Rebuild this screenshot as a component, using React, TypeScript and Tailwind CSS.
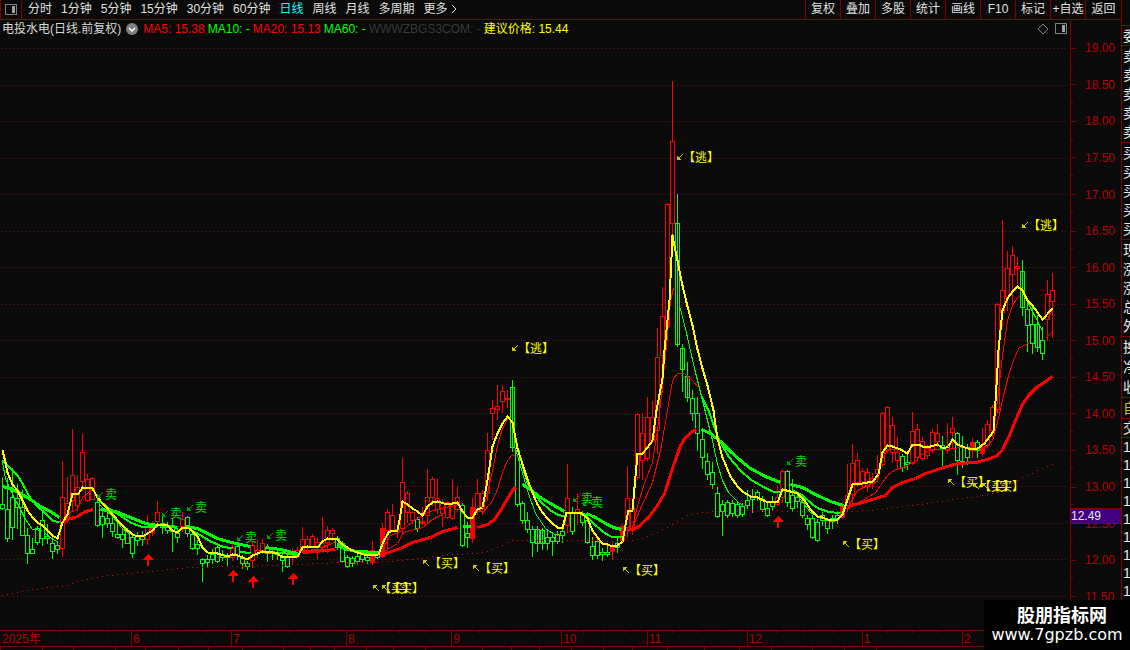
type Kind = "r" | "g" | "R" | "w";
type Candle = [number, number, number, number, Kind];
type Point = [number, number];

const RED = "#ff0000";
const GREEN = "#00ff00";
const YELLOW = "#ffff00";
const STEP = 5;

// high, body top, body bottom, low, kind (r/g hollow, R solid, w hollow with a visible wick)
const candles: Candle[] = [
  [478, 504, 508, 509, "g"], [478, 509, 538, 541, "g"], [468, 497, 527, 539, "g"], [484, 498, 507, 528, "g"],
  [490, 507, 535, 535, "g"], [528, 535, 553, 563, "g"], [538, 549, 553, 553, "g"], [526, 528, 542, 544, "g"],
  [512, 520, 538, 545, "g"], [524, 536, 538, 543, "g"], [534, 543, 551, 558, "g"], [541, 545, 549, 553, "g"],
  [461, 497, 548, 556, "r"], [477, 503, 516, 522, "r"], [429, 475, 500, 510, "r"], [475, 487, 505, 510, "r"],
  [434, 452, 481, 490, "r"], [474, 479, 500, 501, "r"], [477, 478, 499, 499, "r"], [500, 502, 525, 526, "g"],
  [510, 516, 524, 537, "g"], [510, 518, 523, 527, "g"], [514, 523, 531, 536, "g"], [523, 534, 537, 538, "g"],
  [529, 534, 539, 547, "g"], [528, 530, 543, 543, "g"], [535, 537, 553, 557, "g"], [532, 536, 540, 545, "g"],
  [531, 535, 539, 545, "g"], [515, 527, 539, 544, "r"], [521, 528, 532, 535, "r"], [501, 512, 521, 527, "r"],
  [517, 523, 527, 533, "g"], [522, 525, 530, 533, "g"], [518, 525, 531, 551, "g"], [528, 533, 537, 542, "g"],
  [512, 519, 526, 531, "r"], [516, 517, 533, 536, "g"], [530, 534, 548, 549, "g"], [540, 544, 548, 554, "g"],
  [558, 559, 563, 581, "g"], [555, 559, 562, 567, "g"], [549, 554, 559, 563, "g"], [545, 547, 561, 562, "g"],
  [550, 554, 557, 560, "g"], [553, 555, 557, 566, "g"], [541, 548, 557, 560, "r"], [545, 546, 555, 559, "g"],
  [555, 558, 563, 568, "g"], [561, 563, 566, 569, "g"], [542, 545, 560, 567, "r"], [540, 550, 553, 557, "r"],
  [539, 543, 550, 553, "r"], [544, 548, 553, 561, "g"], [549, 551, 553, 559, "g"], [550, 552, 554, 559, "g"],
  [553, 556, 560, 571, "g"], [555, 557, 566, 567, "g"], [548, 554, 557, 563, "r"], [547, 550, 556, 557, "r"],
  [527, 539, 551, 552, "r"], [536, 539, 546, 551, "r"], [534, 536, 546, 547, "r"], [538, 542, 547, 558, "r"],
  [517, 543, 547, 552, "r"], [526, 530, 542, 552, "r"], [528, 530, 533, 540, "r"], [536, 538, 547, 549, "g"],
  [541, 543, 561, 561, "g"], [555, 557, 566, 567, "g"], [556, 558, 563, 566, "g"], [552, 556, 561, 563, "g"],
  [552, 553, 559, 562, "g"], [552, 557, 560, 563, "g"], [541, 550, 562, 564, "R"], [552, 554, 557, 558, "g"],
  [523, 528, 556, 557, "R"], [509, 512, 530, 548, "r"], [504, 515, 530, 531, "r"], [526, 529, 531, 537, "r"],
  [458, 482, 528, 534, "r"], [491, 493, 512, 522, "r"], [511, 512, 520, 523, "r"], [517, 519, 528, 531, "g"],
  [507, 521, 523, 524, "R"], [469, 497, 515, 523, "r"], [477, 479, 497, 505, "r"], [479, 498, 509, 513, "r"],
  [499, 503, 513, 526, "r"], [501, 502, 517, 518, "r"], [479, 503, 518, 519, "r"], [486, 497, 509, 511, "r"],
  [503, 505, 545, 546, "g"], [522, 533, 537, 547, "g"], [498, 507, 538, 542, "R"], [479, 493, 511, 514, "r"],
  [490, 493, 511, 514, "r"], [433, 450, 493, 500, "r"], [400, 408, 413, 439, "r"], [385, 406, 409, 419, "r"],
  [385, 391, 401, 412, "r"], [390, 398, 399, 407, "r"], [380, 387, 447, 451, "w"], [448, 450, 504, 506, "g"],
  [501, 503, 520, 523, "g"], [512, 520, 529, 532, "g"], [526, 529, 542, 556, "g"], [526, 529, 543, 551, "w"],
  [528, 530, 543, 549, "w"], [530, 537, 543, 549, "g"], [532, 537, 541, 555, "g"], [531, 534, 541, 543, "g"],
  [527, 531, 535, 542, "g"], [464, 498, 525, 532, "r"], [507, 513, 531, 534, "g"], [494, 509, 513, 524, "r"],
  [511, 513, 522, 525, "g"], [515, 520, 542, 543, "g"], [537, 546, 555, 559, "g"], [536, 541, 555, 558, "g"],
  [548, 552, 554, 560, "g"], [546, 552, 554, 556, "g"], [543, 547, 551, 559, "R"], [538, 543, 547, 552, "g"],
  [524, 526, 540, 542, "R"], [466, 498, 527, 536, "r"], [498, 508, 530, 534, "r"], [413, 414, 477, 479, "r"],
  [413, 433, 460, 479, "r"], [397, 417, 458, 460, "r"], [401, 417, 440, 442, "r"], [328, 357, 430, 453, "r"],
  [287, 316, 355, 392, "r"], [203, 204, 326, 340, "r"], [81, 141, 223, 240, "r"], [194, 223, 344, 346, "w"],
  [344, 348, 369, 391, "w"], [362, 376, 397, 401, "w"], [390, 398, 413, 420, "g"], [397, 413, 433, 450, "g"],
  [432, 439, 457, 468, "g"], [453, 461, 474, 479, "g"], [462, 472, 484, 488, "g"], [487, 493, 516, 517, "g"],
  [500, 504, 511, 535, "g"], [500, 502, 515, 517, "g"], [500, 503, 513, 516, "g"], [501, 504, 515, 517, "g"],
  [503, 506, 514, 516, "g"], [490, 500, 505, 508, "g"], [489, 496, 499, 512, "g"], [490, 492, 497, 500, "g"],
  [496, 499, 509, 511, "g"], [503, 508, 515, 516, "g"], [496, 501, 506, 509, "g"], [485, 497, 504, 505, "r"],
  [469, 471, 497, 502, "r"], [470, 471, 502, 506, "g"], [479, 495, 508, 511, "g"], [494, 497, 501, 507, "g"],
  [499, 502, 515, 517, "g"], [515, 518, 524, 529, "g"], [515, 518, 537, 538, "g"], [519, 522, 540, 541, "g"],
  [511, 515, 520, 525, "g"], [518, 520, 528, 533, "g"], [515, 518, 521, 528, "g"], [512, 515, 518, 523, "g"],
  [502, 505, 517, 518, "R"], [464, 495, 508, 510, "r"], [444, 463, 494, 503, "r"], [453, 460, 482, 485, "r"],
  [468, 471, 483, 487, "r"], [468, 472, 486, 491, "r"], [473, 478, 483, 488, "r"], [455, 469, 473, 480, "r"],
  [412, 413, 464, 466, "r"], [406, 407, 450, 452, "r"], [417, 425, 452, 462, "r"], [437, 452, 460, 469, "r"],
  [454, 456, 467, 471, "g"], [453, 462, 464, 469, "g"], [412, 431, 463, 464, "r"], [424, 429, 457, 460, "r"],
  [437, 441, 458, 459, "r"], [445, 448, 455, 458, "r"], [429, 432, 450, 452, "r"], [424, 433, 441, 446, "r"],
  [436, 445, 448, 467, "g"], [423, 447, 450, 453, "r"], [417, 428, 432, 448, "r"], [432, 433, 460, 474, "g"],
  [436, 461, 463, 467, "g"], [444, 447, 457, 464, "g"], [438, 442, 450, 457, "R"], [440, 442, 450, 457, "g"],
  [428, 447, 453, 456, "R"], [420, 424, 445, 447, "r"], [405, 407, 430, 436, "r"], [303, 304, 409, 412, "r"],
  [220, 290, 312, 325, "r"], [251, 268, 296, 310, "r"], [246, 255, 274, 305, "r"], [257, 266, 268, 283, "r"],
  [260, 271, 307, 315, "w"], [300, 309, 325, 351, "g"], [307, 324, 343, 353, "g"], [315, 324, 347, 351, "w"],
  [327, 340, 353, 359, "g"], [280, 294, 319, 340, "r"], [273, 290, 301, 337, "r"],
];

const yellowLine =
  "2,450 5,462 7,472 12,484 17,490 22,500 27,510 32,517 37,522 42,525 47,530 52,535 57,538 62,522 67,514 72,493 78,493 82,487 92,488 97,497 105,506 112,514 120,523 127,530 134,535 142,536 147,533 152,530 157,524 167,525 172,530 177,532 182,527 187,527 190,529 197,536 202,547 207,552 217,553 227,556 232,554 237,555 242,557 247,559 252,555 262,551 272,552 277,553 282,557 297,556 302,547 307,546 317,547 322,541 327,538 337,539 342,544 350,549 357,552 367,555 378,554 383,541 388,532 392,530 397,530 399,520 402,501 407,504 412,508 417,511 422,515 427,506 432,502 437,501 447,504 457,502 462,511 467,517 472,517 477,509 482,507 487,480 492,446 497,433 502,423 507,416 512,422 517,448 522,464 527,479 532,492 537,504 542,512 547,518 552,523 557,527 562,528 566,512 580,512 587,518 592,530 597,537 602,543 607,544 612,546 617,545 622,541 625,525 628,510 632,510 637,453 642,453 647,447 652,440 656,410 662,378 664,350 667,320 669,300 672,235 677,260 682,285 687,306 692,325 697,349 702,368 707,385 713,410 717,438 722,457 730,476 737,486 742,491 750,496 757,497 765,501 777,502 782,489 790,491 797,493 804,500 810,509 817,516 822,517 827,519 837,519 842,514 847,499 852,484 862,483 872,481 878,474 882,452 887,445 892,446 900,449 907,453 912,444 918,444 924,447 930,446 937,444 943,448 948,446 952,439 957,444 967,448 977,448 984,443 993,431 996,385 998,350 1000,330 1002,310 1007,298 1012,291 1017,286 1022,290 1027,300 1032,305 1042,319 1052,308";

const thickRed = [
  "63,522 67,519 77,516 85,511 93,509",
  "302,552 315,551 335,549",
  "382,554 400,548 412,542 430,537 442,531 457,527",
  "477,527 487,524 494,519 500,510 507,498 512,490 515,487",
  "627,530 637,527 648,517 657,505 664,493 672,468 680,445 685,437 692,431 696,429",
  "847,506 862,502 875,498 885,495 892,487 902,482 915,478 925,473 940,468 957,463 975,462 990,458 997,455 1002,449 1008,437 1015,420 1022,404 1028,395 1036,387 1045,381 1052,376",
];

const thickGreen = [
  "2,486 10,488 20,493 30,499 40,506 50,511 59,517",
  "100,509 115,511 130,517 145,523 157,525",
  "162,525 177,527",
  "185,526 197,528 207,533 217,538 227,541 240,544 250,546",
  "265,547 280,549 297,553",
  "337,543 345,548 355,551 380,552",
  "462,526 470,526",
  "522,484 530,489 540,497 550,503 557,507 564,511",
  "586,513 595,517 605,523 613,527 621,529",
  "701,429 710,433 720,441 730,451 740,460 750,468 765,476 780,482",
  "790,484 802,487 815,494 830,501 843,505",
];

const mediumGreen = [
  "2,460 10,468 17,475 22,483 30,498 37,506 45,513 52,520 59,522",
  "97,498 107,507 115,512 130,522 140,526 157,527",
  "190,529 202,536 210,541 222,546 232,548",
  "240,551 250,553",
  "280,552 297,555",
  "337,545 345,549 370,553",
  "522,465 527,482 532,491 540,501 550,510 557,514 564,516",
  "584,514 592,522 602,531 610,536 621,537",
  "701,396 708,410 718,438 728,456 740,470 750,479 762,486 772,491 782,492",
  "792,490 802,495 812,504 818,508 827,511 840,513",
];

const thinGreen = [
  "2,462 5,478 10,490 17,503 25,519 32,529 42,530",
  "45,533 52,539 57,541",
  "100,505 112,516 122,528 130,534",
  "515,448 527,490 535,513 545,528 552,533 558,535",
  "587,520 594,534 602,543 612,546",
  "680,308 687,337 694,368 702,400 707,420 712,440 717,464 722,480 728,492 738,502 743,505",
  "797,495 810,512 822,518",
  "1027,301 1034,315 1042,330",
];

const thinRed = [
  "62,524 67,513 72,511 77,509 82,497 92,489",
  "302,550 320,549 335,541",
  "322,547 330,543",
  "382,548 390,535 400,531 412,521 427,512 440,508 460,504",
  "382,552 397,543 403,532 422,527 432,519 442,514",
  "482,510 487,493 492,470 497,445 502,428 508,417",
  "482,513 492,500 497,489 502,472 507,460 512,454 515,456",
  "632,527 637,505 645,480 652,462 657,430 662,385 666,345 670,300 673,288",
  "632,527 640,508 652,482 660,450 667,410 671,385 673,378 677,373 684,373 692,380 698,387",
  "847,508 857,490 867,485 877,481 882,458 887,449 900,449",
  "850,506 862,500 875,492 887,475 895,469 905,466 918,459",
  "918,456 930,449 945,449 960,447 975,449",
  "993,432 997,400 1002,355 1007,320 1012,305 1017,297 1020,296",
  "983,447 992,440 998,418 1003,395 1008,375 1013,360 1018,348 1023,345 1030,342",
  "1045,338 1052,331",
  "1047,318 1052,310",
];

const costLine: Point[] = [
  [2, 595], [27, 590], [50, 587], [67, 585], [80, 580], [100, 576], [130, 573], [150, 571], [187, 567], [240, 566],
  [300, 564], [340, 562], [365, 562], [390, 561], [420, 558], [450, 554], [480, 553], [495, 548], [512, 540],
  [530, 540], [590, 540], [620, 541], [640, 539], [655, 533], [670, 525], [685, 516], [700, 512], [715, 511],
  [760, 510], [800, 511], [850, 511], [880, 509], [902, 506], [920, 504], [960, 498], [985, 495], [1000, 491],
  [1017, 480], [1022, 477], [1040, 469], [1052, 464],
];

const valueAt = (line: Point[], x: number) => {
  const i = Math.max(1, line.findIndex((p) => p[0] >= x));
  const [x0, y0] = line[i - 1];
  const [x1, y1] = line[i];
  return Math.round(y0 + ((y1 - y0) * (x - x0)) / (x1 - x0));
};

const sellMarks: Point[] = [
  [105, 494], [170, 513], [195, 507], [245, 537], [275, 535], [581, 498], [591, 502], [795, 461],
];
const escapeMarks: Point[] = [[518, 348], [683, 157], [1028, 225]];
const buyMarks: Point[] = [
  [379, 588], [388, 588], [429, 563], [479, 568], [629, 570], [849, 544], [954, 482], [979, 486], [988, 486],
];
const upArrows: Point[] = [[148, 554], [233, 570], [253, 576], [293, 573], [778, 516]];

const prices = [
  "19.00", "18.50", "18.00", "17.50", "17.00", "16.50", "16.00", "15.50",
  "15.00", "14.50", "14.00", "13.50", "13.00", "12.50", "12.00", "11.50",
];

const months = [
  { label: "6", days: 100 },
  { label: "7", days: 115 },
  { label: "8", days: 105 },
  { label: "9", days: 110 },
  { label: "10", days: 85 },
  { label: "11", days: 100 },
  { label: "12", days: 115 },
  { label: "1", days: 100 },
  { label: "2", days: 160 },
];

const periods = [
  "分时", "1分钟", "5分钟", "15分钟", "30分钟", "60分钟", "日线", "周线", "月线", "多周期",
];
const tools = ["复权", "叠加", "多股", "统计", "画线", "F10", "标记", "+自选", "返回"];

const bottomTabs = [
  42, 31, 42, 29, 33, 30, 34, 41, 26, 24, 32, 26, 32, 58, 28, 28, 32, 31, 29, 35, 37, 35, 31, 41, 32, 32, 250,
];

const Lines = ({ lines, color, width }: { lines: string[]; color: string; width: number }) => (
  <g fill="none" stroke={color} strokeWidth={width} strokeLinejoin="round" transform="translate(0.5 0.5)">
    {lines.map((points) => (
      <polyline key={points} points={points} />
    ))}
  </g>
);

const CandleBar = ({ candle, x }: { candle: Candle; x: number }) => {
  const [high, top, bottom, low, kind] = candle;
  const color = kind === "r" || kind === "R" ? RED : GREEN;
  return (
    <g fill={color}>
      <rect x={x} y={high} width={1} height={low - high + 1} />
      <rect x={x - 2} y={top} width={5} height={bottom - top + 1} />
      {kind !== "R" && bottom - top > 1 && (
        <rect x={x - 1} y={top + 1} width={3} height={bottom - top - 1} fill="#0a0a0a" />
      )}
      {kind === "w" && <rect x={x} y={top} width={1} height={bottom - top} />}
    </g>
  );
};

const DownLeft = ({ x, y, color }: { x: number; y: number; color: string }) => (
  <g stroke={color} fill={color}>
    <path d={`M${x + 6} ${y - 3}L${x + 1} ${y + 2}`} fill="none" />
    <path d={`M${x} ${y - 1}V${y + 3}H${x + 4}Z`} stroke="none" />
  </g>
);

const UpLeft = ({ x, y, color }: { x: number; y: number; color: string }) => (
  <g stroke={color} fill={color}>
    <path d={`M${x + 6} ${y + 3}L${x + 1} ${y - 2}`} fill="none" />
    <path d={`M${x} ${y + 1}V${y - 3}H${x + 4}Z`} stroke="none" />
  </g>
);

const Chart = () => (
  <svg
    className="block w-full flex-1 min-h-0"
    viewBox="0 39 1070 591"
    preserveAspectRatio="none"
    shapeRendering="crispEdges"
    fontSize={12}
    role="img"
    aria-label="电投水电 日线"
  >
    <g stroke="#7a0c0c" strokeDasharray="1 3">
      {prices.map((price, i) => {
        const y = Math.round(48 + i * 36.53) + 0.5;
        return <line key={price} x1={1} x2={1068} y1={y} y2={y} />;
      })}
    </g>

    {candles.map((candle, i) => (
      <CandleBar key={i} candle={candle} x={2 + i * STEP} />
    ))}

    <g fill={RED}>
      {candles.map((_, i) => (
        <rect key={i} x={2 + i * STEP} y={valueAt(costLine, 2 + i * STEP)} width={1} height={1} />
      ))}
    </g>

    <Lines lines={thinRed} color={RED} width={1} />
    <Lines lines={thinGreen} color={GREEN} width={1} />
    <Lines lines={mediumGreen} color={GREEN} width={2} />
    <Lines lines={thickGreen} color={GREEN} width={3} />
    <Lines lines={thickRed} color={RED} width={3} />
    <Lines lines={[yellowLine]} color={YELLOW} width={2} />

    {upArrows.map(([x, y]) => (
      <path key={x} fill={RED} d={`M${x} ${y}l5 5v1h-4v6h-2v-6h-4v-1z`} />
    ))}

    {sellMarks.map(([x, y]) => (
      <g key={x} fill="#00e000">
        <DownLeft x={x - 8} y={y + 1} color="#00a000" />
        <text x={x} y={y + 5}>卖</text>
      </g>
    ))}
    {escapeMarks.map(([x, y]) => (
      <g key={x} fill={YELLOW}>
        <DownLeft x={x - 6} y={y} color="#c8c800" />
        <text x={x} y={y + 5}>【逃】</text>
      </g>
    ))}
    {buyMarks.map(([x, y]) => (
      <g key={x} fill={YELLOW}>
        <UpLeft x={x - 6} y={y} color="#c8c800" />
        <text x={x} y={y + 5}>【买】</text>
      </g>
    ))}
  </svg>
);

const PanelIcon = () => (
  <svg width="12" height="12" viewBox="0 0 12 12" shapeRendering="crispEdges">
    <rect x="0.5" y="0.5" width="11" height="10" rx="1" fill="none" stroke="#808080" />
    <rect x="7" y="2" width="3" height="7" fill="#a0a0a0" />
  </svg>
);

const TopBar = () => (
  <div className="h-5 shrink-0 flex border-b border-[#800000] text-[#e0e0e0] overflow-hidden">
    <button aria-label="侧栏" className="w-[22px] flex items-center justify-center border-x border-[#800000]">
      <PanelIcon />
    </button>
    <div className="flex-1 flex items-center gap-[9px] pl-1.5 pb-0.5">
      {periods.map((period) => (
        <button key={period} className={period === "日线" ? "text-[#00ffff]" : ""}>
          {period}
        </button>
      ))}
      <button className="flex items-center gap-0.5">
        更多
        <svg width="8" height="10" viewBox="0 0 8 10" fill="none" stroke="currentColor">
          <path d="M2 1l4 4-4 4" />
        </svg>
      </button>
    </div>
    <div className="flex">
      {tools.map((tool) => (
        <button key={tool} className="w-[35px] pb-0.5 border-l border-[#800000] last:w-9">
          {tool}
        </button>
      ))}
    </div>
  </div>
);

const Legend = () => (
  <div className="h-[19px] shrink-0 flex items-center gap-[3px] pl-0.5 pr-[3px] pb-px">
    <span className="text-[#d8d8d8]">电投水电(日线.前复权)</span>
    <button aria-label="展开" className="mx-0.5">
      <svg width="12" height="12" viewBox="0 0 12 12">
        <circle cx="6" cy="6" r="6" fill="#808080" />
        <path d="M3 5l3 3 3-3" fill="none" stroke="#fff" strokeWidth="1.4" />
      </svg>
    </button>
    <span className="text-[#ff0000]">MA5: 15.38</span>
    <span className="text-[#00ff00]">MA10: -</span>
    <span className="text-[#ff0000]">MA20: 15.13</span>
    <span className="text-[#00ff00]">MA60: -</span>
    <span className="text-[#383838]">WWWZBGS3COM: -</span>
    <span className="text-[#ffff00]">建议价格: 15.44</span>
    <div className="ml-auto flex items-center gap-1.5 text-[#808080]">
      <svg width="12" height="12" viewBox="0 0 12 12" fill="none" stroke="currentColor">
        <path d="M6 1l5 5-5 5-5-5z" />
      </svg>
      <PanelIcon />
    </div>
  </div>
);

const PriceAxis = () => (
  <div className="relative w-[51px] shrink-0 flex flex-col pt-[10px] pb-[15px] border-l border-[#800000] text-[#b80000]">
    {prices.map((price) => (
      <div key={price} className="flex-1 flex items-center relative">
        <span className="w-[5px] h-px bg-[#800000]" />
        <span className="pl-[9px]">{price}</span>
        <span className="absolute left-0 bottom-0 w-0.5 h-px bg-[#800000]" />
      </div>
    ))}
    <div className="absolute left-0 right-0 top-[80%] h-4 flex items-center bg-[#400080] border-y border-[#800000] text-[#e8e8e8]">
      12.49
    </div>
  </div>
);

const TimeAxis = () => (
  <div className="h-4 shrink-0 flex border-t border-[#800000] text-[#b80000] overflow-hidden">
    <div className="relative shrink-0 w-[131px] pl-0.5 pt-px">
      2025年
      <div className="absolute top-0 right-0 w-[71px] h-0.5 flex">
        <i className="flex-1 border-l border-[#800000]" />
        <i className="flex-1 border-l border-[#800000]" />
        <i className="flex-1 border-l border-[#800000]" />
      </div>
    </div>
    {months.map(({ label, days }) => (
      <div
        key={label}
        className="relative border-l border-[#800000] pl-px pt-px"
        style={{ flex: `${days} 1 0` }}
      >
        {label}
        <div className="absolute inset-x-0 top-0 h-0.5 flex">
          <i className="flex-1" />
          <i className="flex-1 border-l border-[#800000]" />
          <i className="flex-1 border-l border-[#800000]" />
          <i className="flex-1 border-l border-[#800000]" />
        </div>
      </div>
    ))}
  </div>
);

const BottomTabs = () => (
  <div className="h-1 shrink-0 flex border-t border-[#800000] overflow-hidden">
    {bottomTabs.map((size, i) => (
      <div key={i} className="border-l border-[#800000]" style={{ flex: `${size} 1 0` }} />
    ))}
  </div>
);

const quoteGroups = [
  { rows: ["委"], height: "h-5" },
  { rows: ["卖", "卖", "卖", "卖", "卖"], height: "h-[97px]" },
  { rows: ["买", "买", "买", "买", "买"], height: "h-[97px]" },
  { rows: ["现", "涨", "涨", "总", "外"], height: "h-[97px]" },
  { rows: ["换", "净", "收"], height: "h-[61px]" },
  { rows: ["自"], height: "h-[21px] text-[#c8c800]" },
  { rows: ["交"], height: "h-[19px]" },
];

const QuotePanel = () => (
  <aside className="w-[9px] shrink-0 overflow-hidden border-l border-[#800000] pt-[25px] text-sm leading-none text-[#e8e8e8]">
    {quoteGroups.map(({ rows, height }, i) => (
      <div key={i} className={`${height} flex flex-col justify-around border-t border-[#800000] pl-px`}>
        {rows.map((row, j) => (
          <span key={j}>{row}</span>
        ))}
      </div>
    ))}
    <div className="border-t border-[#800000] pl-px leading-[18px]">
      {Array.from({ length: 9 }, (_, i) => (
        <div key={i}>1</div>
      ))}
    </div>
  </aside>
);

const App = () => {
  return (
    <div className="relative h-screen flex overflow-hidden bg-[#0a0a0a] text-xs leading-[14px] whitespace-nowrap font-['Liberation_Sans','Noto_Sans_CJK_SC',sans-serif]">
      <div className="flex-1 min-w-0 flex flex-col">
        <TopBar />
        <div className="flex-1 min-h-0 flex">
          <main className="flex-1 min-w-0 flex flex-col">
            <Legend />
            <Chart />
          </main>
          <PriceAxis />
        </div>
        <TimeAxis />
        <BottomTabs />
      </div>
      <QuotePanel />
      <div className="absolute right-0 bottom-0 w-[146px] h-[50px] bg-black text-white flex flex-col items-center justify-center pb-px">
        <p className="pl-2.5 text-lg leading-[20px] font-bold">股朋指标网</p>
        <p className="text-base leading-[18px] font-['DejaVu_Sans',sans-serif]">www.7gpzb.com</p>
      </div>
    </div>
  );
};

export default App;
